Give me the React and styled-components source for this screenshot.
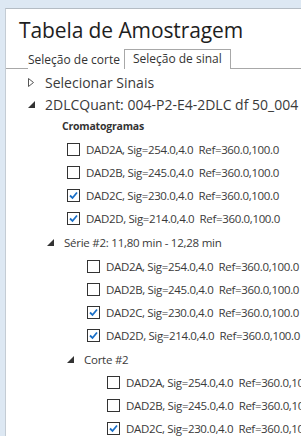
import React from "react";
import styled, { createGlobalStyle } from "styled-components";

const GlobalStyle = createGlobalStyle`
  html, body {
    margin: 0;
    padding: 0;
    background: #dde8f3;
    overflow: hidden;
  }
  body {
    font-family: "Open Sans", "Noto Sans", sans-serif;
  }
`;

const Panel = styled.div`
  margin: 8px 0 0 5px;
  height: 440px;
  background: #fff;
  border-top: 1px solid #b4bcc4;
  border-left: 1px solid #c4ccd4;
`;

const Title = styled.h1`
  margin: 0;
  padding: 7px 0 0 13px;
  height: 32px;
  font-size: 21px;
  line-height: 28px;
  font-weight: 400;
  color: #1e1e1e;
  letter-spacing: -0.1px;
`;

const TabBar = styled.div`
  display: flex;
  align-items: flex-end;
  height: 20px;
  padding-left: 22px;
  border-bottom: 1px solid #a8a8a8;
`;

const Tab = styled.div`
  height: ${(p) => (p.active ? "19px" : "18px")};
  padding: 0 ${(p) => (p.active ? "8px" : "4px")} 0 ${(p) => (p.active ? "8px" : "0")};
  margin-bottom: -1px;
  font-size: 12px;
  line-height: 18px;
  color: #333;
  background: #fff;
  border: ${(p) => (p.active ? "1px solid #a8a8a8" : "none")};
  border-bottom: none;
  white-space: nowrap;
`;

const Tree = styled.div`
  padding: 2px 0 0 22px;
  white-space: nowrap;
`;

const NodeRow = styled.div`
  display: flex;
  align-items: center;
  height: ${(p) => p.h || 23}px;
  font-size: ${(p) => (p.big ? "14px" : "11.5px")};
  letter-spacing: ${(p) => (p.big ? "0" : "-0.25px")};
  color: #3a3a3a;
`;

const Arrow = styled.span`
  display: inline-flex;
  width: ${(p) => (p.big ? 17 : 19)}px;
  padding-left: ${(p) => (p.big ? 0 : 2)}px;
  box-sizing: border-box;
`;

const Children = styled.div`
  padding-left: ${(p) => p.indent || 20}px;
`;

const SectionLabel = styled.div`
  height: 23px;
  line-height: 23px;
  font-size: 10.5px;
  letter-spacing: -0.2px;
  font-weight: 700;
  color: #333;
  padding-left: 17px;
`;

const Item = styled.label`
  display: flex;
  align-items: center;
  height: 23px;
  padding-left: 22px;
  font-size: 11.5px;
  letter-spacing: -0.35px;
  color: #3a3a3a;
  white-space: pre;
`;

const Box = styled.span`
  width: 13px;
  height: 13px;
  box-sizing: border-box;
  border: 1px solid #333;
  background: #fff;
  margin-right: 6px;
  display: inline-flex;
  align-items: center;
  justify-content: center;
  flex-shrink: 0;
`;

const Open = () => (
  <svg width="6" height="9" viewBox="0 0 6 9">
    <path d="M0.5 0.5 L5.5 4.5 L0.5 8.5 Z" fill="none" stroke="#555" />
  </svg>
);

const Expanded = () => (
  <svg width="7" height="7" viewBox="0 0 7 7">
    <path d="M7 0 L7 7 L0 7 Z" fill="#333" />
  </svg>
);

const Check = () => (
  <svg width="9" height="9" viewBox="0 0 9 9">
    <path d="M1 4.5 L3.5 7 L8 1.5" fill="none" stroke="#1a6fc7" strokeWidth="1.8" />
  </svg>
);

const Checkbox = ({ checked, children }) => (
  <Item>
    <Box>{checked && <Check />}</Box>
    {children}
  </Item>
);

const signals = [
  { name: "DAD2A, Sig=254.0,4.0  Ref=360.0,100.0", checked: false },
  { name: "DAD2B, Sig=245.0,4.0  Ref=360.0,100.0", checked: false },
  { name: "DAD2C, Sig=230.0,4.0  Ref=360.0,100.0", checked: true },
  { name: "DAD2D, Sig=214.0,4.0  Ref=360.0,100.0", checked: true },
];

const SignalList = ({ list }) =>
  list.map((s) => (
    <Checkbox key={s.name} checked={s.checked}>
      {s.name}
    </Checkbox>
  ));

export default function App() {
  return (
    <>
      <GlobalStyle />
      <Panel>
        <Title>Tabela de Amostragem</Title>
        <TabBar>
          <Tab>Seleção de corte</Tab>
          <Tab active>Seleção de sinal</Tab>
        </TabBar>
        <Tree>
          <NodeRow big h={22}>
            <Arrow big>
              <Open />
            </Arrow>
            Selecionar Sinais
          </NodeRow>
          <NodeRow big h={22}>
            <Arrow big>
              <Expanded />
            </Arrow>
            2DLCQuant: 004-P2-E4-2DLC df 50_004
          </NodeRow>
          <Children indent={17}>
            <SectionLabel>Cromatogramas</SectionLabel>
            <SignalList list={signals} />
            <NodeRow h={25}>
              <Arrow>
                <Expanded />
              </Arrow>
              Série #2: 11,80 min - 12,28 min
            </NodeRow>
            <Children>
              <SignalList list={signals} />
              <NodeRow h={24}>
                <Arrow>
                  <Expanded />
                </Arrow>
                Corte #2
              </NodeRow>
              <Children>
                <SignalList list={signals} />
              </Children>
            </Children>
          </Children>
        </Tree>
      </Panel>
    </>
  );
}
